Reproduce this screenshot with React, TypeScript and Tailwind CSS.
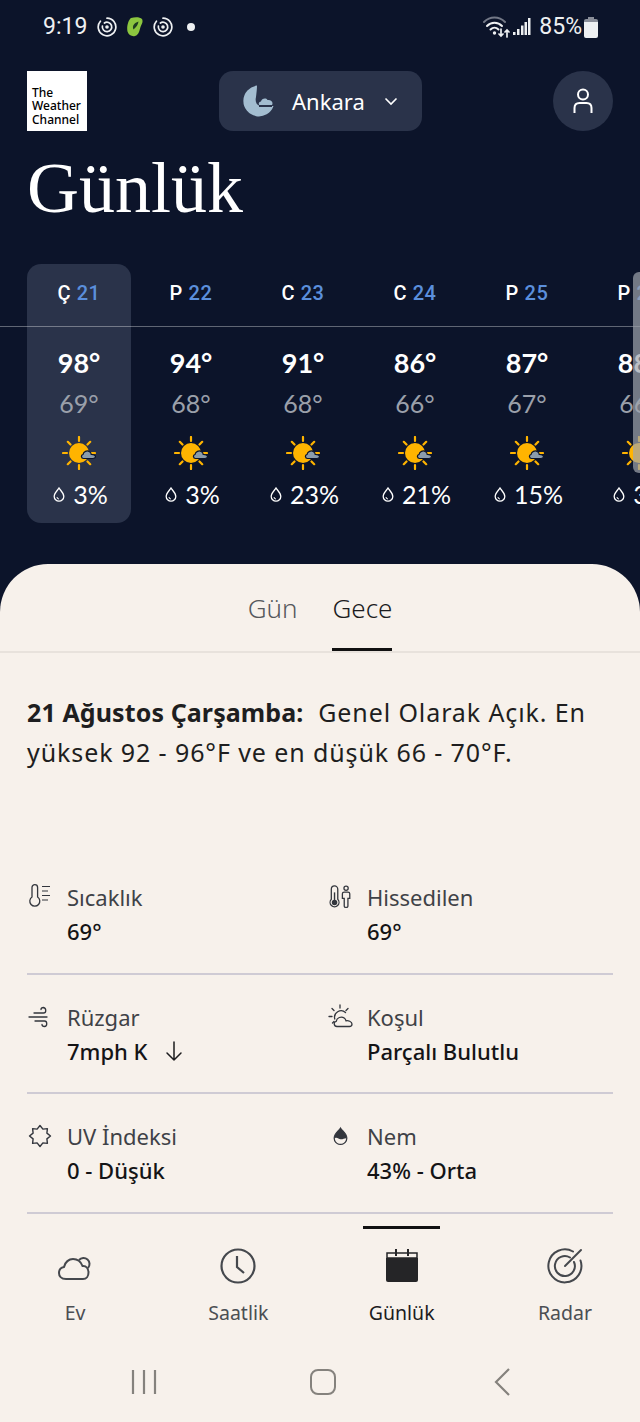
const days = [
  { d: "Ç", n: 21, hi: "98°", lo: "69°", rain: "3%", active: true },
  { d: "P", n: 22, hi: "94°", lo: "68°", rain: "3%" },
  { d: "C", n: 23, hi: "91°", lo: "68°", rain: "23%" },
  { d: "C", n: 24, hi: "86°", lo: "66°", rain: "21%" },
  { d: "P", n: 25, hi: "87°", lo: "67°", rain: "15%" },
  { d: "P", n: 26, hi: "88°", lo: "66°", rain: "3%" },
]

function SyncDot() {
  return (
    <svg width="20" height="20" viewBox="0 0 20 20" fill="none" stroke="#eef0f2">
      <path d="M10 1.200a8.800 8.800 0 1 1-6.600 3" strokeWidth="1.700" strokeLinecap="round" />
      <path d="M5.400 9a4.700 4.700 0 1 0 2-3" strokeWidth="1.700" strokeLinecap="round" />
      <circle cx="10" cy="10" r="1.800" fill="#eef0f2" stroke="none" />
    </svg>
  )
}

function Leaf() {
  return (
    <svg width="16" height="20" viewBox="0 0 16 20">
      <path d="M4 1C8 0 13 0 15 2c1.500 3-.5 5-1.500 8-1 3-1.500 8-5.500 9-3 .8-6.500-1-7.500-4.500C-.5 10 1 3.500 4 1Z" fill="#8cc63f" />
      <path d="M6.500 12.500c-1.500-3 0-6.500 5-8-.5 3-2 5.500-5 8Z" fill="#1e3b22" />
    </svg>
  )
}

function SunCloud() {
  return (
    <svg width="34" height="34" viewBox="0 0 34 34" fill="none">
      <g stroke="#ffb400" strokeWidth="2.200" strokeLinecap="round">
        <path d="M17 1v4M17 29v4M1 17h4M29 17h4M5.800 5.800l2.700 2.700M25.500 25.500l2.700 2.700M28.200 5.800l-2.700 2.700M8.500 25.500l-2.700 2.700" />
      </g>
      <circle cx="17" cy="17" r="10" fill="#ffb400" />
      <path d="M21.500 22.500c-2.500 0-2.800-3.500-.5-4 .5-2.800 4-4.500 6.200-3 1.500.8 2 2 2 2.800 2.400-.1 4.300 1 4.300 2.200 0 1.300-1 2-2.500 2Z" fill="#8b9cac" stroke="#0c142a" strokeWidth="1.200" />
    </svg>
  )
}

function Drop({ size = 14, color = "#ffffff" }: { size?: number; color?: string }) {
  return (
    <svg width={size} height={size * 1.25} viewBox="0 0 12 15" fill="none" stroke={color} strokeWidth="1.300">
      <path d="M6 1c1.200 2.200 4.800 5 4.800 8.400a4.800 4.800 0 0 1-9.600 0C1.200 6 4.800 3.200 6 1Z" />
      <path d="M4 10a2 2 0 0 0 2 2" strokeWidth="1" />
    </svg>
  )
}

function DayColumn({ day }: { day: (typeof days)[number] }) {
  return (
    <div className="flex w-[112px] shrink-0 justify-center">
      <div className={`flex h-[259px] w-[104px] flex-col items-center rounded-[14px] ${day.active ? "bg-[#2a334a]" : ""}`}>
        <div className="mt-[15px] h-[28px] font-['Roboto',sans-serif] text-[20px] leading-[28px] font-medium tracking-[0.6px]">
          <span className="text-white">{day.d}</span> <span className="text-[#5b8fdc]">{day.n}</span>
        </div>
        <div className="mt-[39px] text-[27px] leading-[34px] font-bold text-white">{day.hi}</div>
        <div className="mt-[6px] text-[25px] leading-[34px] text-[#9ba0aa]">{day.lo}</div>
        <div className="mt-[16px] h-[34px]">
          <SunCloud />
        </div>
        <div className="mt-[8px] ml-[3px] flex items-center gap-[8px] text-[25px] leading-[32px] text-white">
          <Drop size={12} />
          <span>{day.rain}</span>
        </div>
      </div>
    </div>
  )
}

const ThermoList = () => (
  <svg width="26" height="26" viewBox="0 0 26 26" fill="none" stroke="#33363d" strokeWidth="1.300">
    <path d="M5 3.500a2.800 2.800 0 0 1 5.600 0v9.500a5 5 0 1 1-5.600 0Z" />
    <path d="M15 2.500h8M15 7h6M15 11.500h8M15 16h6" strokeWidth="1.200" />
  </svg>
)
const ThermoPerson = () => (
  <svg className="ml-[2px]" width="24" height="24" viewBox="0 0 26 26" fill="none" stroke="#33363d" strokeWidth="1.400">
    <path d="M2.500 4.500a3.500 3.500 0 0 1 7 0v11a4.800 4.800 0 1 1-7 0Z" />
    <circle cx="6" cy="19" r="2.300" fill="#33363d" />
    <path d="M6 8v9" strokeWidth="1.500" />
    <circle cx="18.500" cy="3.500" r="2.300" />
    <path d="M14.500 9.500c0-1 1-1.800 2-1.800h4c1 0 2 .8 2 1.800v5h-2V23c0 1-.5 1.300-2 1.300s-2-.3-2-1.300v-8.500h-2Z" />
  </svg>
)
const Wind = () => (
  <svg width="24" height="24" viewBox="0 0 24 24" fill="none" stroke="#33363d" strokeWidth="1.300" strokeLinecap="round">
    <path d="M7 8h9.500c3 0 3-5 0-5.500-1.500 0-2.500.8-2.500 2" />
    <path d="M2 12h18" />
    <path d="M8 16h9.500c3 0 3 5.500 0 5.500-1.500 0-2.500-.8-2.500-2" />
  </svg>
)
const Star = () => (
  <svg className="ml-[1px]" width="24" height="24" viewBox="0 0 24 24" fill="none" stroke="#33363d" strokeWidth="1.400" strokeLinejoin="round">
    <path d="M12 1.500 14.900 5.100 19.400 4.600 18.900 9.100 22.500 12 18.900 14.900 19.400 19.400 14.900 18.900 12 22.500 9.100 18.900 4.600 19.400 5.100 14.900 1.500 12 5.100 9.100 4.600 4.600 9.100 5.100Z" />
  </svg>
)
const PartlyCloud = () => (
  <svg className="ml-[1px]" width="26" height="26" viewBox="0 0 26 26" fill="none" stroke="#33363d" strokeWidth="1.300" strokeLinecap="round">
    <path d="M12 1v3M4 4.500l2 2M20 4.500l-2 2M1 12.500h3M4.500 19l1.500-1.500" />
    <path d="M6.800 15a6.500 6.500 0 0 1 10.700-6.500" />
    <path d="M9 22.500c-3.300 0-3.800-4.500-.8-5.200.5-3.500 5-5.500 8-3.300 1 .7 1.600 1.700 1.800 2.800 2-.4 6 .5 6 3.200 0 1.500-1 2.500-2.500 2.500Z" />
  </svg>
)
const HalfDrop = () => (
  <svg className="ml-[5px]" width="17" height="20" viewBox="0 0 20 22" fill="none">
    <path d="M10 1.500c2 3.500 7.500 7 7.500 12a7.500 7.500 0 0 1-15 0c0-5 5.500-8.500 7.500-12Z" fill="#33363d" stroke="#33363d" strokeWidth="1.300" />
    <path d="M3.400 13.500c2.500-1.500 4.500 1 6.600 1.200 2.500.2 4.500-1 6.600-1.200 0 4-3 6.700-6.600 6.700s-6.600-2.800-6.600-6.700Z" fill="#f7f1eb" />
  </svg>
)
const ArrowDown = () => (
  <svg width="20" height="22" viewBox="0 0 20 22" fill="none" stroke="#1c1c1e" strokeWidth="1.500" strokeLinecap="round" strokeLinejoin="round">
    <path d="M10 2v18M3 13l7 7 7-7" />
  </svg>
)

function Detail({ icon, label, value, extra }: { icon: React.ReactNode; label: string; value: string; extra?: React.ReactNode }) {
  return (
    <div className="flex h-[117.500px] pt-[25px]">
      <div className="flex h-[34px] w-[40px] items-center">{icon}</div>
      <div>
        <div className="text-[22px] leading-[34px] text-[#3f4247]">{label}</div>
        <div className="flex items-center gap-[17px] text-[22px] leading-[34px] font-medium text-[#141416]">
          {value}
          {extra}
        </div>
      </div>
    </div>
  )
}

export default function App() {
  return (
    <div className="relative flex h-[1422px] w-[640px] flex-col overflow-hidden bg-[#0c142a] font-['Lato',sans-serif]">
      {/* status bar */}
      <div className="flex h-[54px] items-center justify-between pr-[42px] pl-[43px] font-['Roboto',sans-serif] text-[23px] text-[#eef0f2]">
        <div className="flex items-center gap-[8px]">
          <span className="mr-[2px]">9:19</span>
          <SyncDot />
          <span className="mx-[2px] flex"><Leaf /></span>
          <SyncDot />
          <span className="ml-[6px] h-[8px] w-[8px] rounded-full bg-[#eef0f2]" />
        </div>
        <div className="flex items-center gap-[5px]">
          <svg className="mr-[-3px]" width="28" height="22" viewBox="0 0 28 22" fill="none" stroke="#eef0f2" strokeLinecap="round">
            <path d="M1 6c6-6 15-6 21 0" stroke="#737886" strokeWidth="2" />
            <path d="M4 10c4-4.500 11-4.500 15 0M7.500 13.500c2.500-2.500 5.500-2.500 8 0" strokeWidth="2" />
            <circle cx="11.500" cy="17" r="1.700" fill="#eef0f2" stroke="none" />
            <path d="M18 13v7M16 18l2 2 2-2M24 21v-7M22 16l2-2 2 2" strokeWidth="1.700" />
          </svg>
          <svg className="mr-[3px]" width="18" height="20" viewBox="0 0 18 20" fill="#eef0f2">
            <path d="M0 15h2.500v3H0ZM4 12h2.500v6H4ZM8 8.500h2.500V18H8ZM11.500 5H14v13h-2.500ZM15 1h2.500v17H15Z" />
          </svg>
          <span>85%</span>
          <span className="ml-[-3px] flex">
            <svg width="14" height="21" viewBox="0 0 14 21">
              <path d="M4 0h6v2H4Z" fill="#8a8e99" />
              <path d="M2 2h10a2 2 0 0 1 2 2v1H0V4a2 2 0 0 1 2-2Z" fill="#8a8e99" />
              <path d="M0 5h14v14a2 2 0 0 1-2 2H2a2 2 0 0 1-2-2Z" fill="#eef0f2" />
            </svg>
          </span>
        </div>
      </div>

      {/* header */}
      <div className="mt-[17px] flex h-[60px] items-center justify-between pr-[27px] pl-[27px]">
        <div className="flex h-[60px] w-[60px] flex-col justify-center bg-white pt-[10px] pl-[5px] font-['Noto_Sans',sans-serif] text-[12px] leading-[13.500px] font-medium text-black">
          <span>The</span>
          <span>Weather</span>
          <span>Channel</span>
        </div>
        <div className="ml-[1px] flex h-[60px] w-[203px] items-center rounded-[14px] bg-[#2a334a] pl-[24px]">
          <svg width="31" height="32" viewBox="0 0 31 32">
            <path d="M14 .5A15.500 15.500 0 1 0 30.500 21H17c-4-1-5-5-4-9 .5-4 1-8 1-11.500Z" fill="#a3bdd0" />
            <path d="M18 21c-3-.5-3-4 0-4.500.5-3 5-4.200 6.500-1.500 2.500-.5 5 .8 5 3.300 0 1.700-1 2.700-2.500 2.700Z" fill="#a3bdd0" />
            <path d="M16 21h13" stroke="#2a334a" strokeWidth="2" />
          </svg>
          <span className="ml-[18px] font-['Noto_Sans',sans-serif] text-[22px] text-white">Ankara</span>
          <svg className="ml-[19px]" width="14" height="9" viewBox="0 0 14 9" fill="none" stroke="#ffffff" strokeWidth="1.600">
            <path d="M1.500 1.500 7 7l5.500-5.500" />
          </svg>
        </div>
        <div className="flex h-[60px] w-[60px] items-center justify-center rounded-full bg-[#2a334a]">
          <svg width="20" height="26" viewBox="0 0 20 26" fill="none" stroke="#ffffff" strokeWidth="2">
            <circle cx="10" cy="6.500" r="5" />
            <path d="M1.500 25v-5c0-3 2-5 5-5h7c3 0 5 2 5 5v5" />
          </svg>
        </div>
      </div>

      <h1 className="mt-[13px] ml-[27px] font-['Liberation_Serif',serif] text-[72px] leading-[88px] font-normal text-white">Günlük</h1>

      {/* forecast strip */}
      <div className="relative mt-[32px] flex h-[259px] pl-[23px]">
        {days.map((day) => (
          <DayColumn key={day.n} day={day} />
        ))}
        <div className="absolute top-[62px] right-0 left-0 h-px bg-white/35" />
        <div className="absolute top-[8px] right-0 h-[201px] w-[7px] rounded-l-[6px] bg-[#a0a4ac]/70" />
      </div>

      {/* bottom sheet */}
      <div className="mt-[41px] flex flex-1 flex-col rounded-t-[48px] bg-[#f7f1eb] font-['Noto_Sans',sans-serif]">
        <div className="flex h-[89px] justify-center gap-[35px] border-b-2 border-[#e8e2dc] text-[26px]">
          <div className="pt-[25px] leading-[38px] font-light text-[#55585c]">Gün</div>
          <div className="relative pt-[25px] leading-[38px] font-light text-[#1c1c1e]">
            Gece
            <span className="absolute right-0 bottom-0 left-0 h-[3px] bg-[#111]" />
          </div>
        </div>

        <p className="mt-[39px] h-[163px] px-[27px] text-[25px] leading-[40px] tracking-[0.9px] text-[#1e1e20]">
          <b className="font-bold tracking-[0.1px]">21 Ağustos Çarşamba:</b>&nbsp; Genel Olarak Açık. En yüksek 92 - 96°F ve en düşük 66 - 70°F.
        </p>

        <div className="flex flex-col px-[27px]">
          <div className="grid grid-cols-[300px_1fr] border-b-2 border-[#cfcbd4]">
            <Detail icon={<ThermoList />} label="Sıcaklık" value="69°" />
            <Detail icon={<ThermoPerson />} label="Hissedilen" value="69°" />
          </div>
          <div className="grid grid-cols-[300px_1fr] border-b-2 border-[#cfcbd4]">
            <Detail icon={<Wind />} label="Rüzgar" value="7mph K" extra={<ArrowDown />} />
            <Detail icon={<PartlyCloud />} label="Koşul" value="Parçalı Bulutlu" />
          </div>
          <div className="grid grid-cols-[300px_1fr] border-b-2 border-[#cfcbd4]">
            <Detail icon={<Star />} label="UV İndeksi" value="0 - Düşük" />
            <Detail icon={<HalfDrop />} label="Nem" value="43% - Orta" />
          </div>
        </div>

        {/* tab bar */}
        <div className="mt-[12px] flex h-[110px] justify-between px-[35px] text-[19.500px] text-[#4b4e53]">
          <div className="flex w-[80px] flex-col items-center pt-[23px]">
            <svg width="34" height="34" viewBox="0 0 34 34" fill="none" stroke="#45484d" strokeWidth="2">
              <path d="M8 30c-5 0-7-3-7-6s2-5.500 5-6c1-5 5-8 9-8 5 0 8 3 9.500 7 4-.5 6 3 6 6.500 0 3.500-2 6.500-5.500 6.500Z" />
              <path d="M21 11a6 6 0 1 1 9 8" />
            </svg>
            <span className="mt-[17px] leading-[26px]">Ev</span>
          </div>
          <div className="flex w-[80px] flex-col items-center pt-[22px]">
            <svg width="36" height="36" viewBox="0 0 36 36" fill="none" stroke="#45484d" strokeWidth="2.200">
              <circle cx="18" cy="18" r="16.500" />
              <path d="M17 8v11l7 6" />
            </svg>
            <span className="mt-[16px] leading-[26px]">Saatlik</span>
          </div>
          <div className="relative flex w-[80px] flex-col items-center pt-[23px] text-[#1c1c1e]">
            <span className="absolute top-0 left-[1.500px] h-[3px] w-[77px] bg-[#111]" />
            <svg width="32" height="33" viewBox="0 0 32 33">
              <path d="M1 4h30v5H1Z" fill="none" stroke="#252527" strokeWidth="1.500" />
              <path d="M0 9h32v22a2 2 0 0 1-2 2H2a2 2 0 0 1-2-2Z" fill="#252527" />
              <path d="M9 0h2v7H9ZM21 0h2v7h-2Z" fill="#252527" />
            </svg>
            <span className="mt-[18px] leading-[26px]">Günlük</span>
          </div>
          <div className="flex w-[80px] flex-col items-center pt-[22px]">
            <svg width="36" height="36" viewBox="0 0 36 36" fill="none" stroke="#45484d" strokeWidth="2" strokeLinecap="round">
              <path d="M26 3.500A16.500 16.500 0 1 0 33.500 12.500" />
              <path d="M23 9.500A10 10 0 1 0 27 14" />
              <path d="M18 18 34 2" />
            </svg>
            <span className="mt-[16px] leading-[26px]">Radar</span>
          </div>
        </div>

        {/* android nav */}
        <div className="grid flex-1 grid-cols-[178px_180px_180px] items-center pl-[55px] pt-[6px]">
          <div className="flex justify-center">
            <svg width="28" height="26" viewBox="0 0 28 26" fill="none" stroke="#85827d" strokeWidth="2.200">
              <path d="M3 1v24M14 1v24M25 1v24" />
            </svg>
          </div>
          <div className="flex justify-center">
            <div className="h-[26px] w-[26px] rounded-[8px] border-2 border-[#85827d]" />
          </div>
          <div className="flex justify-center">
            <svg width="20" height="28" viewBox="0 0 20 28" fill="none" stroke="#85827d" strokeWidth="2.200">
              <path d="M16 1 3 14l13 13" />
            </svg>
          </div>
        </div>
      </div>
    </div>
  )
}
